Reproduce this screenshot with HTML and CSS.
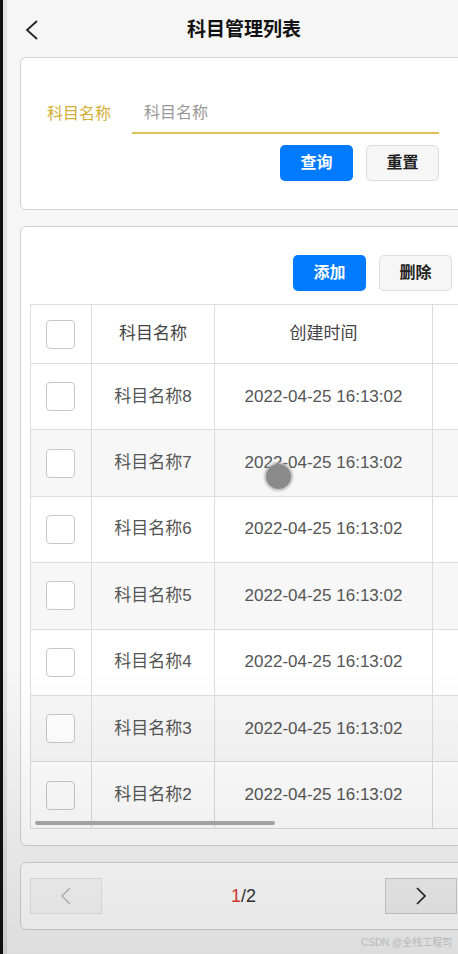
FILE: index.html
```html
<!DOCTYPE html>
<html lang="zh-CN">
<head>
    <meta charset="UTF-8">
    <meta name="viewport" content="width=device-width, initial-scale=1.0">
    <title>科目管理列表</title>
    <link rel="stylesheet" href="styles.css">
</head>
<body>
    <div id="app">
        <div class="nav-bar">
            <span class="nav-back">
                <svg width="16" height="22" viewBox="0 0 16 22"><polyline points="13,2 3,11 13,20" fill="none" stroke="#222" stroke-width="1.8"/></svg>
            </span>
            <h1 class="nav-title">科目管理列表</h1>
        </div>

        <div class="card search-card">
            <div class="field">
                <label class="field-label">科目名称</label>
                <div class="field-input"><span class="placeholder">科目名称</span></div>
            </div>
            <div class="btn-row">
                <span class="btn btn-primary">查询</span>
                <span class="btn btn-default">重置</span>
            </div>
        </div>

        <div class="card list-card">
            <div class="btn-row list-btns">
                <span class="btn btn-primary">添加</span>
                <span class="btn btn-default">删除</span>
            </div>
            <div class="table-wrap">
                <table class="grid">
                    <thead>
                        <tr>
                            <th class="col-check"><span class="checkbox"></span></th>
                            <th class="col-name">科目名称</th>
                            <th class="col-time">创建时间</th>
                            <th class="col-op"></th>
                        </tr>
                    </thead>
                    <tbody>
                        <tr><td><span class="checkbox"></span></td><td>科目名称8</td><td>2022-04-25 16:13:02</td><td></td></tr>
                        <tr><td><span class="checkbox"></span></td><td>科目名称7</td><td>2022-04-25 16:13:02</td><td></td></tr>
                        <tr><td><span class="checkbox"></span></td><td>科目名称6</td><td>2022-04-25 16:13:02</td><td></td></tr>
                        <tr><td><span class="checkbox"></span></td><td>科目名称5</td><td>2022-04-25 16:13:02</td><td></td></tr>
                        <tr><td><span class="checkbox"></span></td><td>科目名称4</td><td>2022-04-25 16:13:02</td><td></td></tr>
                        <tr><td><span class="checkbox"></span></td><td>科目名称3</td><td>2022-04-25 16:13:02</td><td></td></tr>
                        <tr><td><span class="checkbox"></span></td><td>科目名称2</td><td>2022-04-25 16:13:02</td><td></td></tr>
                    </tbody>
                </table>
                <span class="scroll-thumb"></span>
            </div>
        </div>

        <div class="card pager">
            <span class="pager-btn disabled">
                <svg width="12" height="20" viewBox="0 0 12 20"><polyline points="10,2 2,10 10,18" fill="none" stroke="#bbb" stroke-width="1.5"/></svg>
            </span>
            <span class="pager-num"><em>1</em>/2</span>
            <span class="pager-btn">
                <svg width="12" height="20" viewBox="0 0 12 20"><polyline points="2,2 10,10 2,18" fill="none" stroke="#222" stroke-width="1.7"/></svg>
            </span>
        </div>

        <span class="touch-dot"></span>
        <span class="shade"></span>
        <span class="watermark">CSDN @全栈工程司</span>
    </div>
</body>
</html>
```

FILE: styles.css
```css
*{
    margin: 0;
    padding: 0;
    box-sizing: border-box;
}
html,body{
    width: 458px;
    height: 954px;
    overflow: hidden;
    background: #111;
}
body{
    font-family: "Liberation Sans", "Noto Sans CJK SC", sans-serif;
    color: #333;
}
#app{
    position: relative;
    width: 478px;
    height: 954px;
    margin-left: 3px;
    background: #f6f6f6;
    border-left: 4px solid #e2e2e2;
}

/* 顶部导航 */
.nav-bar{
    height: 57px;
    padding-top: 3px;
    display: flex;
    align-items: center;
    justify-content: center;
    position: relative;
}
.nav-back{
    position: absolute;
    left: 17px;
    top: 19px;
    line-height: 0;
}
.nav-title{
    font-size: 19px;
    font-weight: bold;
    color: #111;
    line-height: 26px;
}

.card{
    margin: 0 14px 0 13px;
    background: #fff;
    border: 1px solid #d2d2d2;
    border-radius: 6px;
}

/* 搜索 */
.search-card{
    height: 153px;
    padding: 34px 27px 0 26px;
}
.field{
    display: flex;
    align-items: flex-end;
    height: 42px;
}
.field-label{
    width: 85px;
    font-size: 16px;
    line-height: 24px;
    color: #d2ae35;
    padding-bottom: 8px;
}
.field-input{
    flex: 1;
    height: 42px;
    border-bottom: 2px solid #dfc256;
    padding: 9px 0 0 12px;
}
.placeholder{
    font-size: 16px;
    line-height: 24px;
    color: #999;
}
.btn-row{
    display: flex;
    justify-content: flex-end;
    gap: 13px;
    margin-top: 11px;
}
.btn{
    width: 73px;
    height: 36px;
    border-radius: 5px;
    font-size: 16px;
    font-weight: bold;
    line-height: 36px;
    text-align: center;
}
.btn-primary{
    background: #007aff;
    color: #fff;
}
.btn-default{
    background: #f6f6f6;
    border: 1px solid #ddd;
    line-height: 34px;
    color: #222;
}

/* 列表 */
.list-card{
    margin-top: 16px;
    height: 620px;
    padding: 28px 14px 0 9px;
}
.list-btns{
    margin-top: 0;
}
.table-wrap{
    position: relative;
    margin-top: 13px;
    width: 470px;
    overflow: hidden;
}
.grid{
    border-collapse: collapse;
    width: 520px;
    table-layout: fixed;
}
.grid th,.grid td{
    border: 1px solid #dcdcdc;
    text-align: center;
    font-size: 17px;
    font-weight: normal;
    color: #555;
    line-height: 24px;
    white-space: nowrap;
    overflow: hidden;
}
.grid th{
    height: 59px;
    color: #444;
}
.grid td{
    height: 66.4px;
}
.col-check{ width: 61px; }
.col-name{ width: 123px; }
.col-time{ width: 218px; }
.col-op{ width: 118px; }
.grid tbody tr:nth-child(even) td{
    background: #f7f7f7;
}
.checkbox{
    display: inline-block;
    width: 29px;
    height: 29px;
    border: 1px solid #c8c8c8;
    border-radius: 4px;
    background: #fff;
    vertical-align: middle;
    margin-left: -2px;
}
.scroll-thumb{
    position: absolute;
    left: 5px;
    bottom: 4px;
    width: 240px;
    height: 4px;
    border-radius: 2px;
    background: #aaa;
}

/* 分页 */
.pager{
    margin-top: 16px;
    height: 68px;
    padding: 0 9px;
    display: flex;
    align-items: center;
    justify-content: space-between;
}
.pager-btn{
    width: 72px;
    height: 36px;
    border: 1px solid #ccc;
    background: #f0f0f0;
    display: flex;
    align-items: center;
    justify-content: center;
}
.pager-btn.disabled{
    border-color: #e6e6e6;
    background: #f8f8f8;
}
.pager-num{
    font-size: 18px;
    color: #333;
}
.pager-num em{
    font-style: normal;
    color: #e43b36;
}

.touch-dot{
    position: absolute;
    left: 259px;
    top: 464px;
    width: 25px;
    height: 25px;
    border-radius: 50%;
    background: #8a8a8a;
    box-shadow: 0 0 2px 2px rgba(160,160,160,0.6);
}
.shade{
    position: absolute;
    left: -4px;
    top: 0;
    right: 0;
    bottom: 0;
    pointer-events: none;
    background: linear-gradient(to bottom, rgba(0,0,0,0) 0, rgba(0,0,0,0) 70%, rgba(0,0,0,0.1) 100%);
}
.watermark{
    position: absolute;
    left: 354px;
    top: 936px;
    font-size: 10px;
    line-height: 14px;
    color: #b8b8b8;
    white-space: nowrap;
}
```
